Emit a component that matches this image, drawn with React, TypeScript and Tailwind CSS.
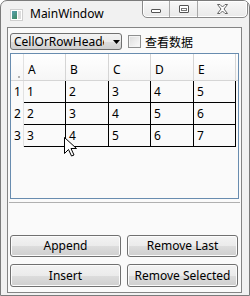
import React from "react";

const font = { fontFamily: '"Noto Sans", "Open Sans", "Noto Sans CJK SC", sans-serif' };

function Cursor() {
  return (
    <svg className="absolute left-[63px] top-[136px]" width="13" height="20" viewBox="0 0 13 20">
      <path d="M0.5 0.5 L0.5 16.5 L4.5 12.5 L7.5 19 L10 18 L7 11.5 L12.5 11.5 Z" fill="#ffffff" stroke="#000000" strokeWidth="1" strokeLinejoin="miter" />
    </svg>
  );
}

const cols = ["A", "B", "C", "D", "E"];
const widths = ["w-[42px]", "w-[43px]", "w-[42px]", "w-[43px]", "w-[42px]"];
const rows = [
  [1, 2, 3, 4, 5],
  [2, 3, 4, 5, 6],
  [3, 4, 5, 6, 7],
];

function Btn({ label, h }: { label: string; h: string }) {
  return (
    <div
      className={`w-[111px] ${h} rounded-[3px] border border-[#707070] flex items-center justify-center text-[12px] text-black bg-[linear-gradient(#f3f3f3_0%,#ebebeb_50%,#dddddd_50%,#cfcfcf_100%)] shadow-[inset_0_0_0_1px_#fcfcfc]`}
    >
      <span className="leading-none">{label}</span>
    </div>
  );
}

export default function App() {
  return (
    <div style={font} className="relative w-[250px] h-[296px] overflow-hidden bg-[#f1f1f1] border border-[#7b7b7b] rounded-t-[7px] text-black">
      {/* Title bar */}
      <div className="h-[26px] flex items-start">
        <div className="ml-[9px] mt-[8px] w-[13px] h-[12px] border border-[#cfcfcf] bg-white flex p-[1px]">
          <div className="w-[6px] h-full bg-[linear-gradient(135deg,#5aa0b0,#3f8a60)]" />
          <div className="w-[4px] h-full bg-[#dcdcdc] ml-[1px]" />
        </div>
        <div className="ml-[7px] mt-[5px] text-[12px] leading-[16px]">MainWindow</div>
        <div className="ml-auto mr-[1px] -mt-[1px] h-[18px] flex border border-[#8a8a8a] rounded-b-[5px] bg-[linear-gradient(#f8f8f8,#e9e9e9)] shadow-[inset_0_0_0_1px_#ffffff]">
          <div className="w-[27px] h-full border-r border-[#a8a8a8] flex items-end justify-center pb-[4px]">
            <div className="w-[10px] h-[4px] border border-[#555] rounded-[1px] bg-white" />
          </div>
          <div className="w-[28px] h-full border-r border-[#a8a8a8] flex items-center justify-center">
            <div className="w-[10px] h-[8px] border border-[#555] rounded-[1px] bg-white flex items-center justify-center">
              <div className="w-[6px] h-[3px] border border-[#777]" />
            </div>
          </div>
          <div className="w-[49px] h-full flex items-center justify-center">
            <svg width="11" height="10" viewBox="0 0 11 10">
              <path d="M0.5 0.5 H3 L5.5 3 L8 0.5 H10.5 L7 5 L10.5 9.5 H8 L5.5 7 L3 9.5 H0.5 L4 5 Z" fill="#ffffff" stroke="#666" strokeWidth="1" />
            </svg>
          </div>
        </div>
      </div>

      {/* Client area */}
      <div className="ml-[6px] w-[235px] h-[266px] border border-[#848484] bg-[#fafafa] flex flex-col">
        <div className="mt-[5px] ml-[2px] flex items-center">
          <div className="w-[112px] h-[17px] rounded-[3px] border border-[#707070] bg-[linear-gradient(#f3f3f3_0%,#ebebeb_50%,#dddddd_50%,#cfcfcf_100%)] flex items-center relative overflow-hidden">
            <div className="ml-[3px] w-[90px] overflow-hidden whitespace-nowrap text-[12px] leading-[15px]">CellOrRowHeader</div>
            <svg className="absolute left-[102px] top-[6px]" width="7" height="4" viewBox="0 0 7 4">
              <path d="M0 0 H7 L3.5 4 Z" fill="#000" />
            </svg>
          </div>
          <div className="ml-[6px] w-[13px] h-[13px] border border-[#8e8f8f] bg-[linear-gradient(135deg,#dcdcdc,#fbfbfb)] shadow-[inset_0_0_0_1px_#f4f4f4]" />
          <div className="ml-[4px] text-[12px] leading-[15px]" style={{ fontFamily: '"Noto Sans CJK SC", sans-serif' }}>查看数据</div>
        </div>

        {/* DataGrid */}
        <div className="mt-[3px] ml-[2px] w-[229px] h-[146px] border border-[#688caf] bg-[#fafafa] flex flex-col">
          <div className="h-[27px] flex border-b border-[#d5d5d5] bg-[linear-gradient(#ffffff,#f6f6f6)]">
            <div className="w-[13px] h-full border-r border-[#e2e2e2] relative">
              <div className="absolute right-[3px] bottom-[2px] w-[2px] h-[2px] bg-[#b0b0b0]" />
            </div>
            {cols.map((c, i) => (
              <div key={c} className={`${widths[i]} h-full border-r border-[#d5d5d5] pl-[4px] pt-[9px] text-[12px] leading-[14px]`}>
                {c}
              </div>
            ))}
          </div>
          {rows.map((r, ri) => (
            <div key={ri} className="h-[22px] flex">
              <div className="w-[13px] h-full border-r border-[#e2e2e2] pl-[3px] flex items-center text-[12px]">{ri + 1}</div>
              {r.map((v, ci) => (
                <div key={ci} className={`${widths[ci]} h-full border-r border-b border-black pl-[3px] flex items-center text-[12px]`}>
                  {v}
                </div>
              ))}
            </div>
          ))}
        </div>

        <div className="mt-[3px] mx-[1px] h-[1px] bg-[#b0b0b0]" />

        <div className="mt-[32px] ml-[2px] flex gap-[6px]">
          <Btn label="Append" h="h-[22px]" />
          <Btn label="Remove Last" h="h-[22px]" />
        </div>
        <div className="mt-[7px] ml-[2px] flex gap-[6px]">
          <Btn label="Insert" h="h-[23px]" />
          <Btn label="Remove Selected" h="h-[23px]" />
        </div>
      </div>
      <Cursor />
    </div>
  );
}
